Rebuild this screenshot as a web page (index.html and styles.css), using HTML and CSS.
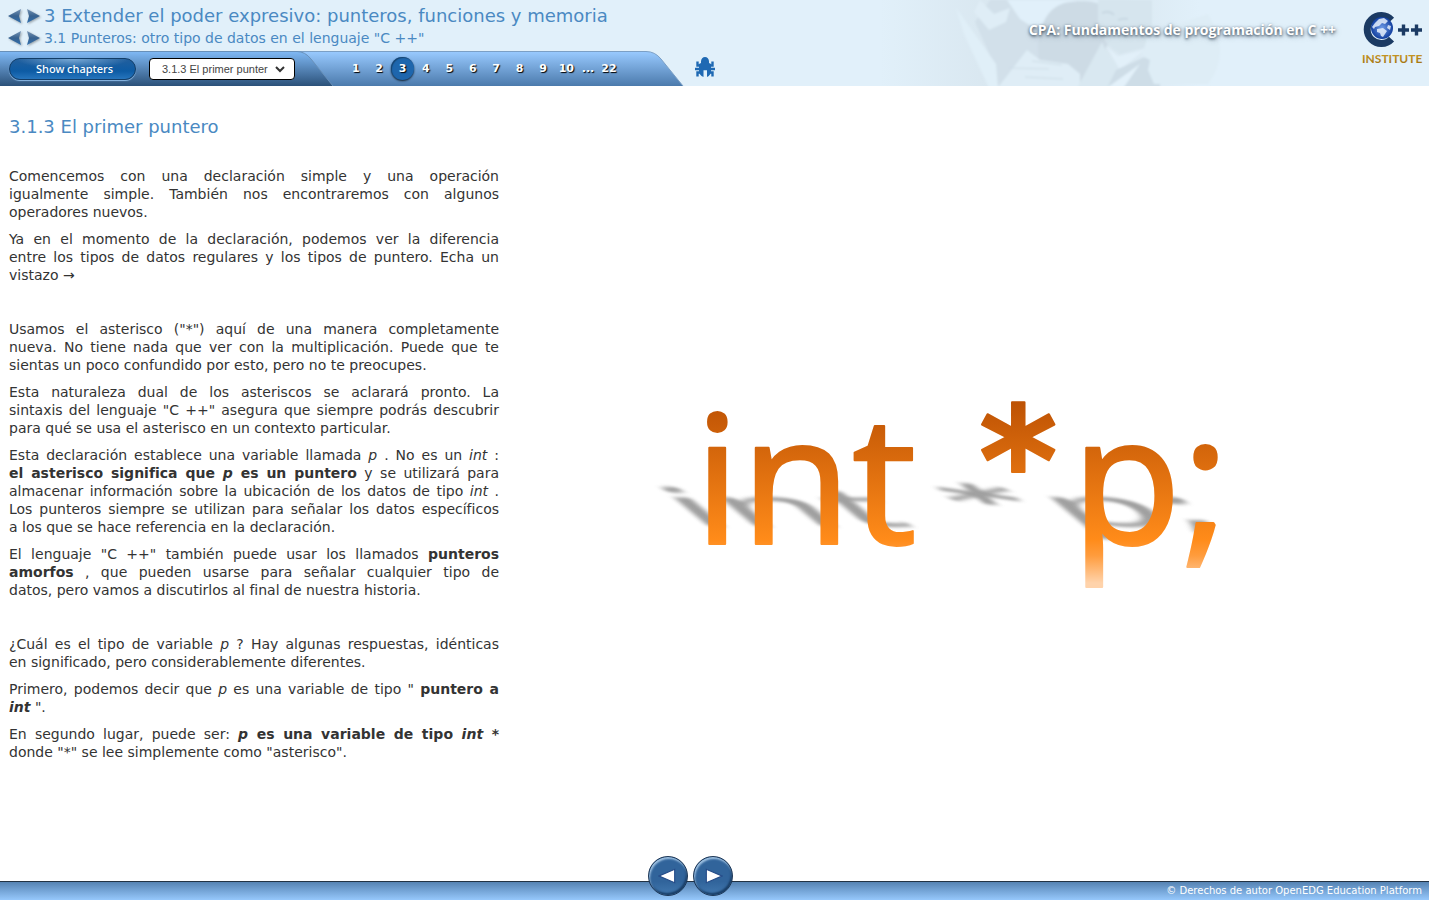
FILE: index.html
```html
<!DOCTYPE html>
<html lang="es">
<head>
<meta charset="utf-8">
<title>3.1.3 El primer puntero</title>
<link rel="stylesheet" href="styles.css">
</head>
<body>
<svg class="defs" aria-hidden="true">
  <defs>
    <linearGradient id="arrow" x1="0" y1="0" x2="0" y2="1"><stop offset="0" stop-color="#7593b4"/><stop offset=".5" stop-color="#38628f"/><stop offset="1" stop-color="#2f6faf"/></linearGradient>
    <linearGradient id="tabDark" x1="0" y1="0" x2="0" y2="1"><stop offset="0" stop-color="#80b9f5"/><stop offset="1" stop-color="#2b5179"/></linearGradient>
    <linearGradient id="tabLight" x1="0" y1="0" x2="0" y2="1"><stop offset="0" stop-color="#99caff"/><stop offset="1" stop-color="#4b7aac"/></linearGradient>
    <symbol id="prev" viewBox="0 0 14 16"><path d="M13 1 11 8l2 7L0 8z" fill="url(#arrow)"/></symbol>
    <symbol id="next" viewBox="0 0 14 16"><path d="M1 1l2 7-2 7L14 8z" fill="url(#arrow)"/></symbol>
  </defs>
</svg>
<header class="top">
  <svg class="photo" viewBox="0 0 549 86" aria-hidden="true">
    <defs><filter id="soft" x="-10%" y="-10%" width="120%" height="120%"><feGaussianBlur stdDeviation="1"/></filter>
    <linearGradient id="wash"><stop offset="0" stop-color="#d9e7f0" stop-opacity="0"/><stop offset=".35" stop-color="#d9e7f0"/><stop offset=".7" stop-color="#d9e7f0"/><stop offset="1" stop-color="#d9e7f0" stop-opacity="0"/></linearGradient></defs>
    <path d="M0 0h320v86H0z" fill="url(#wash)"/>
    <g filter="url(#soft)">
      <path d="M110 0h18l40 30 20 56h-70l-5-24-18-40z" fill="#d2e0ea"/>
      <path d="M76 8l40 56 2 24h-9L84 34z" fill="#e0eff8"/>
      <path d="M100 0l14 14 16-6-4 14-17 8-15-18z" fill="#dfedf6"/>
      <path d="M127 0h91v2c-28-4-42 4-50 26h-14l-14-9z" fill="#e1f0fa"/>
      <path d="M160 90l-2-46c3-26 14-40 32-42q18-3 28 2v22q4 12 10 18L202 90z" fill="#cddbe5"/>
      <path d="M116 90l31-40 13 10 28 4 12 10v16z" fill="#dfedf6"/>
      <path d="M129 68l40 1M145 77l38 2M152 61l30 4" stroke="#cedde7" fill="none"/>
      <path d="M218 0h54v34l-8 14-24 6-12-10-10-22z" fill="#d6e5ee"/>
      <path d="M222 13q8-3 12 2M238 20q6-2 10-1" stroke="#c9d9e3" stroke-width="2" fill="none"/>
      <path d="M196 90l26-48 6 14 10 10-8 24z" fill="#d9e8f1"/>
      <path d="M226 46l12 10 26-6-24 20z" fill="#e2f0f9"/>
      <path d="M236 70l44-20v40h-54z" fill="#cedde7"/>
      <path d="M268 34q40-14 60-20 24 40 0 70H274l-6-14 2-10-8-4z" fill="#deedf6"/>
      <path d="M224 90l36-26-18 26z" fill="#e3f1fa"/>
    </g>
  </svg>
  <div class="headings">
    <div class="crumb crumb-main">
      <a href="#" aria-label="Módulo anterior"><svg class="arrow"><use href="#prev"/></svg></a>
      <a href="#" aria-label="Módulo siguiente"><svg class="arrow"><use href="#next"/></svg></a>
      <span>3 Extender el poder expresivo: punteros, funciones y memoria</span>
    </div>
    <div class="crumb">
      <a href="#" aria-label="Capítulo anterior"><svg class="arrow"><use href="#prev"/></svg></a>
      <a href="#" aria-label="Capítulo siguiente"><svg class="arrow"><use href="#next"/></svg></a>
      <span>3.1 Punteros: otro tipo de datos en el lenguaje "C ++"</span>
    </div>
  </div>
  <div class="course">CPA: Fundamentos de programación en C ++</div>
  <svg class="logo" viewBox="0 0 64 58" role="img" aria-label="C++ Institute">
    <defs><radialGradient id="globe"><stop offset="0" stop-color="#6f9be8"/><stop offset="1" stop-color="#123f9f"/></radialGradient>
    <linearGradient id="gold" x1="0" y1="0" x2="0" y2="1"><stop offset="0" stop-color="#d3a32a"/><stop offset="1" stop-color="#9a6c0c"/></linearGradient></defs>
    <path d="M29.500 9A14 14 0 1 0 29.500 28" fill="none" stroke="#1b3a63" stroke-width="7"/>
    <circle cx="20" cy="17" r="11" fill="url(#globe)"/>
    <path d="M13 12l4-4 5-1 4 3-3 3-3-1-3 3-4 1-1 2-2-2zM15 18l6-1 4 3-2 3-2 3-2-1-1-3-3-1zM26 14l3 1-1 4-3-2z" fill="#e5eefb" opacity=".85"/>
    <path d="M36 19h11M41.500 13.500v11M49 19h11M54.500 13.500v11" stroke="#1b3a63" stroke-width="3.400"/>
    <text x="0" y="52" class="logo-text">INSTITUTE</text>
  </svg>
  <nav class="bar">
    <svg class="tab tab-pages" viewBox="0 0 684 35" aria-hidden="true"><path d="M0 .5H646Q655 .5 661 8L683 35H0z" fill="url(#tabLight)"/><path d="M0 .5H646Q655 .5 661 8L683 35" fill="none" stroke="#7b9fc5"/></svg>
    <svg class="tab tab-chapters" viewBox="0 0 334 35" aria-hidden="true"><path d="M0 .5H297Q305 .5 311 8L333 35H0z" fill="url(#tabDark)"/><path d="M0 .5H297Q305 .5 311 8L333 35" fill="none" stroke="#6890b9"/></svg>
    <div class="controls">
      <button class="chapters" type="button">Show chapters</button>
      <div class="picker">
        <select aria-label="Sección"><option>3.1.3 El primer punter</option></select>
        <svg class="chevron" viewBox="0 0 10 7" aria-hidden="true"><path d="M1 1l4 4 4-4" fill="none" stroke="#333" stroke-width="2"/></svg>
      </div>
    </div>
    <div class="pages">
      <div class="digits"><a href="#">1</a><a href="#">2</a><a href="#" class="current" aria-current="page">3</a><a href="#">4</a><a href="#">5</a><a href="#">6</a><a href="#">7</a><a href="#">8</a><a href="#">9</a><a href="#">10</a></div>
      <span class="more">...</span><a href="#" class="last">22</a>
    </div>
    <a class="bug" href="#" aria-label="Informar de un error"><svg viewBox="0 0 20 20"><g fill="none" stroke="#1f69b3" stroke-width="2.400"><path d="M6 8.500H2.500V4.500M14 8.500h3.500V4.500M0 12h20M6 15.500H2.500V19.500M14 15.500h3.500V19.500"/></g><path d="M6 6V4.500a4 4.500 0 0 1 8 0V6l2 1v7q0 4-4 6v-9H8.500v9Q4 18 4 14V7z" fill="#1f69b3"/></svg></a>
  </nav>
</header>
<main class="content">
  <article class="lesson">
    <h1>3.1.3 El primer puntero</h1>
    <section>
      <p>Comencemos con una declaración simple y una operación igualmente simple. También nos encontraremos con algunos operadores nuevos.</p>
      <p>Ya en el momento de la declaración, podemos ver la diferencia entre&nbsp;los tipos de datos regulares y los tipos de puntero. Echa un vistazo&nbsp;→</p>
    </section>
    <section>
      <p>Usamos el asterisco ("*") aquí de una manera completamente nueva.&nbsp;No tiene nada que ver con la multiplicación. Puede que te sientas&nbsp;un poco confundido por esto, pero no te preocupes.</p>
      <p>Esta naturaleza dual de los asteriscos se aclarará pronto. La sintaxis&nbsp;del lenguaje "C ++" asegura que siempre podrás descubrir para&nbsp;qué se usa el asterisco en un contexto particular.</p>
      <p>Esta declaración establece una variable llamada <i>p</i> . No es un <i>int</i> : <b>el&nbsp;asterisco significa que <i>p</i> es un puntero</b> y se utilizará para almacenar información sobre la ubicación de los datos de tipo <i>int</i> . Los punteros siempre se utilizan para señalar los datos específicos a&nbsp;los que se hace referencia en la declaración.</p>
      <p>El lenguaje "C ++" también puede usar los llamados <b>punteros amorfos</b> , que pueden usarse para señalar cualquier tipo de datos,&nbsp;pero vamos a discutirlos al final de nuestra historia.</p>
    </section>
    <section>
      <p>¿Cuál es el tipo de variable <i>p</i> ? Hay algunas respuestas, idénticas en&nbsp;significado, pero considerablemente diferentes.</p>
      <p>Primero, podemos decir que <i>p</i> es una variable de tipo " <b>puntero a <i>int</i></b> ".</p>
      <p>En segundo lugar, puede ser: <b><i>p</i> es una variable de tipo <i>int</i> *</b> donde "*" se lee simplemente como "asterisco".</p>
    </section>
  </article>
  <figure class="illustration">
    <svg viewBox="650 390 584 200" role="img" aria-label="int *p;">
      <defs>
        <linearGradient id="orange" gradientUnits="userSpaceOnUse" x1="0" y1="400" x2="0" y2="582"><stop offset="0" stop-color="#bd5204"/><stop offset=".76" stop-color="#ff8b19"/><stop offset=".85" stop-color="#ff9c3d"/><stop offset="1" stop-color="#ffd3ab"/></linearGradient>
        <filter id="blur" x="-10%" y="-20%" width="120%" height="140%"><feGaussianBlur stdDeviation="3 6"/></filter>
        <g id="code"><text class="code" x="693" y="543">int</text><text class="star" x="978" y="513">*</text><text class="code" x="1070" y="543">p;</text></g>
      </defs>
      <use href="#code" class="cast" transform="matrix(1 0 .36 .3 -195.840 362.800)"/>
      <use href="#code" class="face"/>
    </svg>
  </figure>
</main>
<footer class="foot">
  <div class="pager">
    <button type="button" aria-label="Anterior"><svg viewBox="0 0 18 16"><path d="M15 2v12L1 8z"/></svg></button>
    <button type="button" aria-label="Siguiente"><svg viewBox="0 0 18 16"><path d="M3 2v12l14-6z"/></svg></button>
  </div>
  <small>© Derechos de autor OpenEDG Education Platform</small>
</footer>
</body>
</html>
```
FILE: styles.css
```css
* { box-sizing: border-box; }
body {
  margin: 0;
  min-height: 100vh;
  display: flex;
  flex-direction: column;
  background: #fff;
  color: #333;
  font: 14px/18px Verdana, "DejaVu Sans", sans-serif;
}
a { color: inherit; text-decoration: none; }
.defs { position: absolute; width: 0; height: 0; }

.top {
  position: relative;
  display: grid;
  grid-template-columns: 1fr auto auto;
  grid-template-rows: 51px 35px;
  background: #e1f0fa;
}
.photo { position: absolute; top: 0; right: 0; width: 549px; height: 86px; }
.headings { position: relative; padding: 4px 0 0 8px; color: #4a89c2; }
.crumb { display: flex; align-items: center; gap: 4px; height: 22px; white-space: nowrap; }
.crumb-main { height: 23px; font-size: 18px; }
.crumb a { display: flex; }
.arrow { width: 14px; height: 16px; filter: drop-shadow(1px 1px 1px #0005); }
.course {
  position: relative;
  grid-row: 1 / 3;
  grid-column: 2;
  padding: 21px 26px 0 0;
  color: #fff;
  font-family: Tahoma, "Open Sans", sans-serif;
  font-weight: 700;
  text-shadow: 0 1px 3px #345, 1px 2px 5px #6789;
}
.logo { position: relative; grid-row: 1 / 3; grid-column: 3; width: 64px; height: 58px; margin: 11px 3px 0 0; }
.logo-text { font: 700 12px Lato, sans-serif; fill: url(#gold); }

.bar { position: relative; grid-row: 2; grid-column: 1; display: flex; align-items: center; }
.tab { position: absolute; top: 0; left: 0; height: 35px; }
.tab-pages { width: 684px; }
.tab-chapters { width: 334px; }
.controls { position: relative; display: flex; align-items: center; gap: 13px; width: 344px; padding-left: 9px; }
.chapters {
  width: 127px;
  height: 22px;
  padding: 0 0 1px 4px;
  border: 1px solid #123d68;
  border-radius: 11px;
  background: radial-gradient(ellipse 45% 50% at 50% 0, #78a9d6, transparent), linear-gradient(#225f9d, #0d5ba4 60%, #2675bd);
  box-shadow: 0 1px 1px #8bb9e5;
  color: #fff;
  font: 500 11px "Noto Sans", sans-serif;
}
.picker { position: relative; }
.picker select {
  appearance: none;
  width: 146px;
  height: 22px;
  padding: 0 24px 0 12px;
  border: 1px solid #000;
  border-radius: 4px;
  background: #fff;
  color: #444;
  font: 11px "Liberation Sans", sans-serif;
}
.chevron { position: absolute; top: 8px; right: 10px; width: 10px; height: 7px; }
.pages {
  position: relative;
  display: flex;
  align-items: center;
  color: #fff;
  font-size: 11px;
  font-weight: 700;
  text-align: center;
  text-shadow: 1px 1px 1px #000;
}
.digits { display: flex; width: 234px; }
.digits a { flex: 1; line-height: 23px; }
.digits .current { border-radius: 50%; background: #1e66ad; box-shadow: inset 1px 1px 1px #17446f, 0 1px 2px #123; }
.more { width: 20px; }
.last { width: 22px; }
.bug { position: relative; margin-left: 75px; height: 24px; }
.bug svg { width: 20px; height: 20px; }

.content { flex: 1; display: flex; }
.lesson { width: 499px; padding: 31px 0 0 9px; text-align: justify; }
.lesson h1 { margin: 0 0 30px; color: #4a89c2; font-size: 18px; font-weight: 400; line-height: 20px; }
.lesson p { margin: 0 0 9px; }
.lesson section { margin-bottom: 36px; }
.illustration { flex: 1; display: flex; align-items: center; justify-content: center; margin: 0; padding: 14px 43px 0 0; }
.illustration svg { width: 100%; max-width: 584px; }
.code { font: 180px "Noto Sans", sans-serif; }
.star { font: 700 150px "DejaVu Sans", sans-serif; }
.cast { fill: #777; opacity: .7; filter: url(#blur); }
.face { fill: url(#orange); stroke: url(#orange); stroke-width: 2; stroke-linejoin: round; }

.foot {
  position: relative;
  display: flex;
  justify-content: flex-end;
  height: 19px;
  margin-bottom: 2px;
  padding-right: 7px;
  border-top: 1px solid #234;
  background: linear-gradient(#5583b3, #96c8fc);
  color: #fff;
}
.foot small { font-size: 10px; }
.pager { position: absolute; inset: -26px 48px auto 0; display: flex; justify-content: center; gap: 5px; }
.pager button {
  display: grid;
  place-items: center;
  width: 40px;
  height: 40px;
  padding: 0;
  border: 1px solid #1c3656;
  border-radius: 50%;
  background: linear-gradient(#31649b 65%, #4279b0);
  box-shadow: inset 1px 2px 2px #9fc2e2, inset -1px -2px 2px #183d66;
}
.pager svg { width: 20px; height: 18px; fill: #fff; stroke: #244b88; }
```
